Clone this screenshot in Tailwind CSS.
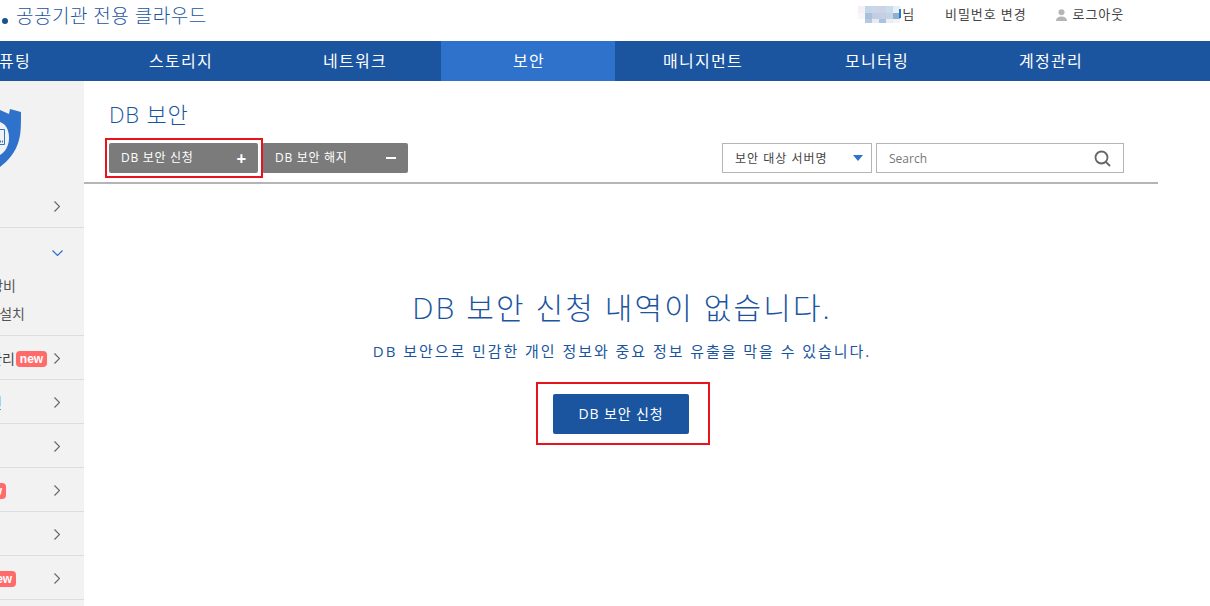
<!DOCTYPE html>
<html lang="ko">
<head>
  <meta charset="UTF-8">
  <title>DB 보안</title>
  <script src="https://cdn.jsdelivr.net/npm/@tailwindcss/browser@4"></script>
</head>
<body class="bg-white overflow-hidden font-['Open_Sans','Noto_Sans_CJK_KR',sans-serif] text-[#333]">
  <div class="w-[1210px] h-[606px] overflow-hidden">
    <!-- Header -->
    <header class="h-[41px] flex items-start relative">
      <div class="flex items-center h-[32px] pl-[2px] text-[#1b559f]">
        <span class="w-[6px] h-[6px] rounded-full bg-[#1b4f96] mt-[9px] mr-[8px]"></span>
        <span class="text-[19px] font-light tracking-[0.5px]">공공기관 전용 클라우드</span>
      </div>
      <div class="ml-auto flex items-center h-[30px] text-[13px] tracking-[0.9px] text-[#444] pr-[86px]">
        <span class="flex items-center">
          <svg width="43" height="18" viewBox="0 0 43 18" class="mt-[-1px]">
            <rect x="0" y="0" width="7" height="7" fill="#f5f0f6"/>
            <rect x="7" y="0" width="7" height="7" fill="#c6d6ea"/>
            <rect x="14" y="0" width="7" height="7" fill="#cdd5e8"/>
            <rect x="21" y="0" width="7" height="7" fill="#cdd3e6"/>
            <rect x="28" y="0" width="7" height="7" fill="#c9dcec"/>
            <rect x="35" y="0" width="7" height="7" fill="#e6eef6"/>
            <rect x="0" y="7" width="7" height="6" fill="#f8f6fa"/>
            <rect x="7" y="7" width="7" height="6" fill="#a8c0dc"/>
            <rect x="14" y="7" width="7" height="6" fill="#c2cde0"/>
            <rect x="21" y="7" width="7" height="6" fill="#c5cfe2"/>
            <rect x="28" y="7" width="7" height="6" fill="#c5d3e4"/>
            <rect x="35" y="7" width="7" height="6" fill="#92afd0"/>
            <rect x="7" y="13" width="7" height="4" fill="#b4c8e0"/>
            <rect x="14" y="13" width="7" height="4" fill="#e4ecf4"/>
            <rect x="21" y="13" width="7" height="4" fill="#a8c4e0"/>
            <rect x="28" y="13" width="7" height="4" fill="#e8f0f6"/>
            <rect x="35" y="13" width="7" height="4" fill="#f0f4f8"/>
            <rect x="41" y="3" width="2" height="9" fill="#1b7fd0"/>
          </svg>
          <span class="ml-[1px]">님</span>
        </span>
        <span class="ml-[30px]">비밀번호 변경</span>
        <span class="ml-[29px] flex items-center">
          <svg width="11" height="12" viewBox="0 0 11 12" class="mr-[6px]" fill="#b5b5b5"><circle cx="5.500" cy="3.200" r="3"/><path d="M0 12c0-3 2-4.500 5.500-4.500s5.500 1.500 5.500 4.500z"/></svg>
          로그아웃
        </span>
      </div>
    </header>

    <!-- Main nav -->
    <nav class="h-[40px] bg-[#1b559f] flex -ml-[81px] text-white text-[16px] tracking-[1.3px]">
      <a class="w-[174px] shrink-0 flex items-center justify-center pl-[2px]">컴퓨팅</a>
      <a class="w-[174px] shrink-0 flex items-center justify-center pl-[2px]">스토리지</a>
      <a class="w-[174px] shrink-0 flex items-center justify-center pl-[2px]">네트워크</a>
      <a class="w-[174px] shrink-0 flex items-center justify-center pl-[2px] bg-[#2f72cc]">보안</a>
      <a class="w-[174px] shrink-0 flex items-center justify-center pl-[2px]">매니지먼트</a>
      <a class="w-[174px] shrink-0 flex items-center justify-center pl-[2px]">모니터링</a>
      <a class="w-[174px] shrink-0 flex items-center justify-center pl-[2px]">계정관리</a>
    </nav>

    <div class="flex h-[525px]">
      <!-- Sidebar, partly scrolled out to the left -->
      <aside class="w-[84px] shrink-0 bg-[#f2f2f2] overflow-hidden text-[14px] text-[#555]">
        <div class="h-[103px] flex justify-start pt-[19px]">
          <svg width="22" height="70" viewBox="0 0 22 70">
            <path d="M0 10C3 11 6 13 9 14L10 9L21 12C21 25 21 33 19 40C16 52 8 61 0 67Z" fill="#2f72cc"/>
            <path d="M0 22C6 24 9 30 9 38C9 46 5 52 0 55Z" fill="#f2f2f2"/>
            <path d="M0 29.500H4.500V44.500H0" fill="none" stroke="#2f72cc" stroke-width="1"/>
            <path d="M0 41.500H5" fill="none" stroke="#2f72cc" stroke-width="2" stroke-dasharray="1 1"/>
          </svg>
        </div>
        <div class="h-[44px] pt-[2px] border-b border-[#ddd] flex items-center justify-end pr-[24px]">
          <svg width="6" height="11" viewBox="0 0 6 11" class="shrink-0" fill="none" stroke="#666" stroke-width="1.200"><path d="M.5 .5l5 5-5 5"/></svg>
        </div>
        <div class="h-[108px] border-b border-[#ddd] relative">
          <div class="flex justify-end pr-[21px] pt-[22px]">
            <svg width="11" height="6" viewBox="0 0 11 6" class="shrink-0" fill="none" stroke="#2f72cc" stroke-width="1.200"><path d="M.5 .5l5 5 5-5"/></svg>
          </div>
          <div class="absolute right-[68px] top-[47px] whitespace-nowrap">장비</div>
          <div class="absolute right-[59px] top-[75px] whitespace-nowrap">설치</div>
        </div>
        <div class="h-[44px] pt-[2px] border-b border-[#ddd] flex items-center justify-end pr-[24px] whitespace-nowrap">
          <span class="shrink-0 text-[#444]">관리</span>
          <span class="ml-[1px] mr-[7px] h-[16px] w-[31px] shrink-0 rounded-[4px] bg-[#ff6b6b] text-white text-[12px] font-bold font-['Liberation_Sans'] flex items-center justify-center">new</span>
          <svg width="6" height="11" viewBox="0 0 6 11" class="shrink-0" fill="none" stroke="#666" stroke-width="1.200"><path d="M.5 .5l5 5-5 5"/></svg>
        </div>
        <div class="h-[44px] pt-[2px] border-b border-[#ddd] flex items-center justify-end pr-[24px] whitespace-nowrap">
          <span class="shrink-0 mr-[52px] text-[#1b559f]">인</span>
          <svg width="6" height="11" viewBox="0 0 6 11" class="shrink-0" fill="none" stroke="#666" stroke-width="1.200"><path d="M.5 .5l5 5-5 5"/></svg>
        </div>
        <div class="h-[44px] pt-[2px] border-b border-[#ddd] flex items-center justify-end pr-[24px]">
          <svg width="6" height="11" viewBox="0 0 6 11" class="shrink-0" fill="none" stroke="#666" stroke-width="1.200"><path d="M.5 .5l5 5-5 5"/></svg>
        </div>
        <div class="h-[44px] pt-[2px] border-b border-[#ddd] flex items-center justify-end pr-[24px] whitespace-nowrap">
          <span class="mr-[48px] h-[16px] w-[31px] shrink-0 rounded-[4px] bg-[#ff6b6b] text-white text-[12px] font-bold font-['Liberation_Sans'] flex items-center justify-center">new</span>
          <svg width="6" height="11" viewBox="0 0 6 11" class="shrink-0" fill="none" stroke="#666" stroke-width="1.200"><path d="M.5 .5l5 5-5 5"/></svg>
        </div>
        <div class="h-[44px] pt-[2px] border-b border-[#ddd] flex items-center justify-end pr-[24px]">
          <svg width="6" height="11" viewBox="0 0 6 11" class="shrink-0" fill="none" stroke="#666" stroke-width="1.200"><path d="M.5 .5l5 5-5 5"/></svg>
        </div>
        <div class="h-[44px] pt-[2px] border-b border-[#ddd] flex items-center justify-end pr-[24px] whitespace-nowrap">
          <span class="mr-[38px] h-[16px] w-[31px] shrink-0 rounded-[4px] bg-[#ff6b6b] text-white text-[12px] font-bold font-['Liberation_Sans'] flex items-center justify-center">new</span>
          <svg width="6" height="11" viewBox="0 0 6 11" class="shrink-0" fill="none" stroke="#666" stroke-width="1.200"><path d="M.5 .5l5 5-5 5"/></svg>
        </div>
      </aside>

      <!-- Content -->
      <main class="w-[1074px] shrink-0 relative">
        <div class="pl-[25px] h-[103px] border-b-2 border-[#b5b5b5] flex flex-col">
          <h1 class="text-[22px] font-light leading-[30px] text-[#1b559f] mt-[18px] tracking-[0.8px]">DB 보안</h1>
          <div class="flex items-start mt-[14px] pr-[34px]">
            <div class="relative">
              <button class="w-[149px] h-[30px] bg-[#7b7b7b] rounded-[2px] text-white text-[12px] tracking-[0.7px] flex items-center justify-between pl-[12px] pr-[11px]">
                <span>DB 보안 신청</span><span class="text-[17px] font-bold leading-none">+</span>
              </button>
              <span class="absolute -left-[4px] -top-[5px] w-[158px] h-[40px] border-2 border-[#e8141c]"></span>
            </div>
            <button class="w-[146px] h-[30px] ml-[4px] bg-[#7b7b7b] rounded-[2px] text-white text-[12px] tracking-[0.7px] flex items-center justify-between pl-[13px] pr-[12px]">
              <span>DB 보안 해지</span><span class="w-[10px] h-[2px] bg-white"></span>
            </button>
            <div class="ml-auto w-[150px] h-[30px] border border-[#b5b5b5] flex items-center justify-between pl-[12px] pr-[8px] text-[12px] tracking-[1px] text-[#444]">
              <span class="mt-[2px]">보안 대상 서버명</span>
              <span class="w-0 h-0 border-x-[5px] border-x-transparent border-t-[6px] border-t-[#2f72cc]"></span>
            </div>
            <div class="ml-[4px] w-[248px] h-[30px] border border-[#b5b5b5] flex items-center justify-between px-[12px] text-[12px] text-[#777]">
              <span class="mt-[2px]">Search</span>
              <svg width="17" height="17" viewBox="0 0 17 17" fill="none" stroke="#666" stroke-width="1.800"><circle cx="7.500" cy="7.500" r="6"/><path d="M12 12l4 4"/></svg>
            </div>
          </div>
        </div>

        <div class="flex flex-col items-center w-[1074px] pt-[104px]">
          <h2 class="text-[30px] font-light leading-[40px] text-[#1b559f] tracking-[2.100px] pl-[2px]">DB 보안 신청 내역이 없습니다.</h2>
          <p class="mt-[13px] text-[15px] leading-[20px] text-[#1b559f] tracking-[1.950px] pl-[2px]">DB 보안으로 민감한 개인 정보와 중요 정보 유출을 막을 수 있습니다.</p>
          <div class="mt-[21px] ml-[4px] w-[174px] h-[63px] border-2 border-[#e8141c] flex items-center pl-[15px]">
            <button class="w-[136px] h-[40px] bg-[#1b559f] rounded-[2px] text-white text-[14px] tracking-[0.9px]">DB 보안 신청</button>
          </div>
        </div>
      </main>
    </div>
  </div>
</body>
</html>
